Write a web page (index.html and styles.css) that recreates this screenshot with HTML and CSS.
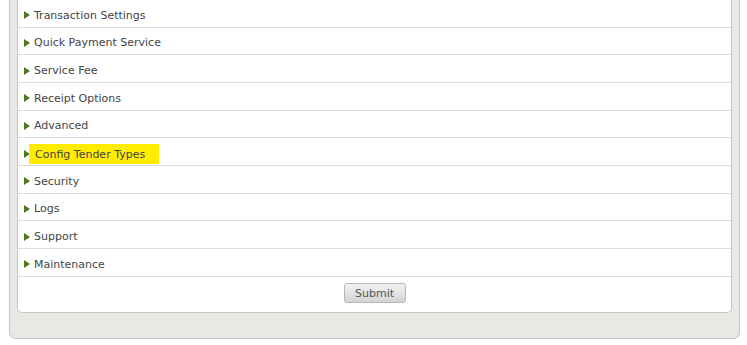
FILE: index.html
```html
<!DOCTYPE html>
<html lang="en">
<head>
<meta charset="UTF-8">
<meta name="viewport" content="width=device-width, initial-scale=1.0">
<title>Settings</title>
<link rel="stylesheet" href="styles.css">
</head>
<body>

<div class="panel">
  <form class="settings">
    <ul class="sections">
      <li><span class="arrow"></span><span class="label">Transaction Settings</span></li>
      <li><span class="arrow"></span><span class="label">Quick Payment Service</span></li>
      <li><span class="arrow"></span><span class="label">Service Fee</span></li>
      <li><span class="arrow"></span><span class="label">Receipt Options</span></li>
      <li><span class="arrow"></span><span class="label">Advanced</span></li>
      <li class="marked"><span class="arrow"></span><span class="label">Config Tender Types</span></li>
      <li><span class="arrow"></span><span class="label">Security</span></li>
      <li><span class="arrow"></span><span class="label">Logs</span></li>
      <li><span class="arrow"></span><span class="label">Support</span></li>
      <li><span class="arrow"></span><span class="label">Maintenance</span></li>
    </ul>
    <div class="actions">
      <button type="button" class="submit">Submit</button>
    </div>
  </form>
</div>

</body>
</html>
```

FILE: styles.css
```css
body {
  margin: 0;
  font-family: "DejaVu Sans", Verdana, sans-serif;
  background: #fff;
}

.panel {
  margin: 0 7px 0 9px;
  height: 339px;
  box-sizing: border-box;
  background: #eae8e4;
  border: 1px solid #c6c6c4;
  border-top: none;
  border-radius: 0 0 7px 7px;
  padding: 0 7px;
}

.settings {
  background: #fff;
  border: 1px solid #c4c4c4;
  border-top: none;
  border-radius: 0 0 5px 5px;
  padding-bottom: 9px;
}

.sections {
  list-style: none;
  margin: 0;
  padding: 0;
}

.sections li {
  display: flex;
  align-items: center;
  box-sizing: border-box;
  height: 27.67px;
  border-bottom: 1px solid #dcdcdc;
  padding: 4px 0 0 6px;
  font-size: 11px;
  color: #444;
}

.arrow {
  width: 0;
  height: 0;
  border-top: 4px solid transparent;
  border-bottom: 4px solid transparent;
  border-left: 6px solid #4d7a1f;
  margin-right: 4px;
}

.marked .label {
  background: #ffec00;
  margin-left: -5px;
  padding: 4px 14px 3px 6px;
}

.actions {
  text-align: center;
  padding-top: 5px;
}

.submit {
  font-family: "DejaVu Sans", Verdana, sans-serif;
  font-size: 11px;
  color: #555;
  width: 62px;
  height: 20px;
  border: 1px solid #b8b8b8;
  border-radius: 3px;
  background: linear-gradient(#f2f2f2, #d4d4d4);
  padding: 0;
}
```
